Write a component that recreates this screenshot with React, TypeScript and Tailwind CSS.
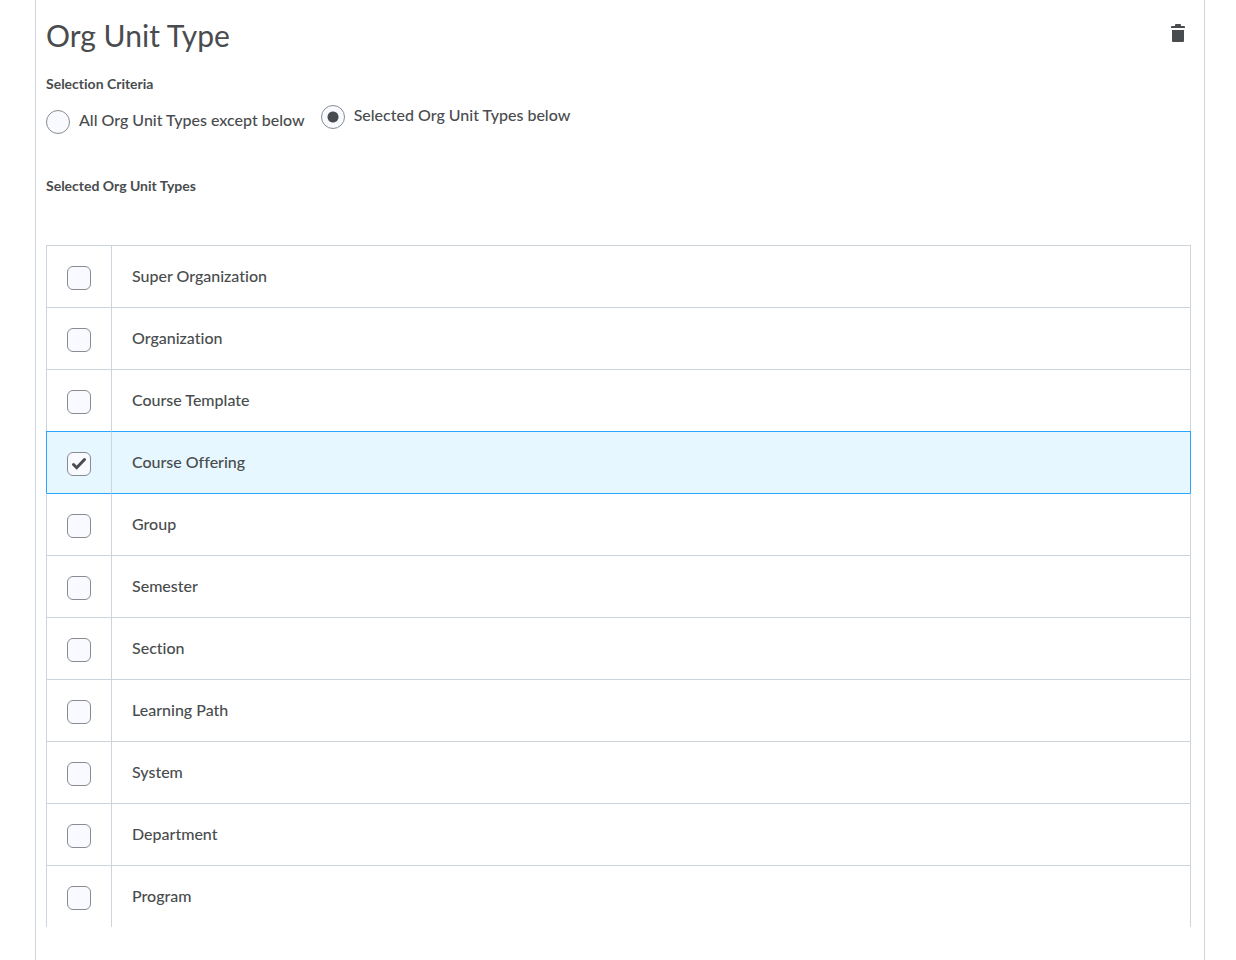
import React, { useState } from 'react';
import clsx from 'clsx';

const ORG_UNIT_TYPES = [
  'Super Organization',
  'Organization',
  'Course Template',
  'Course Offering',
  'Group',
  'Semester',
  'Section',
  'Learning Path',
  'System',
  'Department',
  'Program',
];

const CRITERIA = [
  { value: 'except', label: 'All Org Unit Types except below' },
  { value: 'selected', label: 'Selected Org Unit Types below' },
];

const TrashIcon = () => (
  <svg width="18" height="18" viewBox="0 0 18 18" fill="currentColor" aria-hidden="true">
    <path d="M7 0h4a1 1 0 0 1 1 1v1h3a1 1 0 0 1 1 1v1H2V3a1 1 0 0 1 1-1h3V1a1 1 0 0 1 1-1z" />
    <path d="M3 6h12v11a1 1 0 0 1-1 1H4a1 1 0 0 1-1-1z" />
  </svg>
);

interface CheckboxProps {
  label: string;
  checked: boolean;
  onChange: () => void;
}

const Checkbox = ({ label, checked, onChange }: CheckboxProps) => (
  <span className="relative block w-6 h-6">
    <input
      type="checkbox"
      aria-label={label}
      checked={checked}
      onChange={onChange}
      className="block w-6 h-6 appearance-none rounded-md border border-[#868c8f] bg-[#f9faff]"
    />
    {checked && (
      <svg className="absolute inset-0 pointer-events-none" width="24" height="24" viewBox="0 0 24 24" fill="none" aria-hidden="true">
        <path d="M6.500 12.500l3.200 3.200L17.500 7.500" stroke="#494c4e" strokeWidth="3" strokeLinecap="round" />
      </svg>
    )}
  </span>
);

export default function App() {
  const [criteria, setCriteria] = useState('selected');
  const [selected, setSelected] = useState<string[]>(['Course Offering']);

  const toggle = (type: string) => {
    setSelected((prev) => (prev.includes(type) ? prev.filter((t) => t !== type) : [...prev, type]));
  };

  return (
    <div className="min-h-screen flex flex-col bg-white pl-[35px] pr-[31px] font-['Lato',sans-serif] text-[#494c4e] [font-variant-ligatures:none]">
      <main className="grow border-x border-[#cdd5dc] pl-[10px] pr-[13px] pb-8">
        {/* Header */}
        <div className="flex items-start justify-between pt-4">
          <h1 className="text-[30px] leading-[38px]">Org Unit Type</h1>
          <button type="button" aria-label="Delete" className="mt-2 mr-1">
            <TrashIcon />
          </button>
        </div>

        {/* Criteria */}
        <fieldset className="mt-5">
          <legend className="text-sm leading-5 font-bold">Selection Criteria</legend>
          <div className="flex items-start gap-4 pt-[11px]">
            {CRITERIA.map(({ value, label }, i) => (
              <label key={value} className={clsx('flex items-start gap-[9px]', i === 0 && 'pt-[5px]')}>
                <input
                  type="radio"
                  name="criteria"
                  value={value}
                  checked={criteria === value}
                  onChange={() => setCriteria(value)}
                  className="w-6 h-6 shrink-0 appearance-none rounded-full border border-[#868c8f] bg-[#f9faff] checked:bg-[radial-gradient(circle,#494c4e_5px,#f9faff_6px)]"
                />
                <span className="text-base leading-5 font-medium">{label}</span>
              </label>
            ))}
          </div>
        </fieldset>

        {/* Org unit types */}
        <h2 className="mt-[42px] text-sm leading-5 font-bold">Selected Org Unit Types</h2>
        <table className="mt-[49px] w-full border-separate border-spacing-0">
          <tbody>
            {ORG_UNIT_TYPES.map((type, i) => {
              const isSelected = selected.includes(type);
              const afterSelected = i > 0 && selected.includes(ORG_UNIT_TYPES[i - 1]);
              const topBorder = isSelected || afterSelected ? 'border-t-[#29a6ff]' : 'border-t-[#cdd5dc]';
              const sideBorder = isSelected ? 'border-[#29a6ff]' : 'border-[#cdd5dc]';
              return (
                <tr key={type} className={clsx('h-[62px]', isSelected && 'bg-[#e6f7ff]')}>
                  <td className={clsx('w-[65px] border-t border-l pl-5 pt-[3px]', sideBorder, topBorder)}>
                    <Checkbox label={type} checked={isSelected} onChange={() => toggle(type)} />
                  </td>
                  <td className={clsx('border-t border-x border-l-[#cdd5dc] pl-5 pb-0.5 text-base font-medium', sideBorder, topBorder)}>
                    {type}
                  </td>
                </tr>
              );
            })}
          </tbody>
        </table>
      </main>
    </div>
  );
}
